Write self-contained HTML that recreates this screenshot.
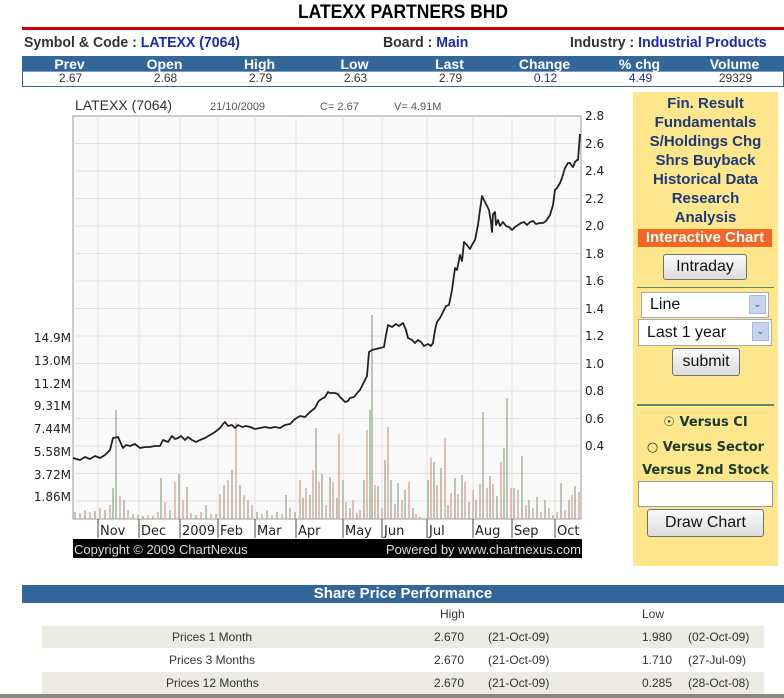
<!DOCTYPE html>
<html><head><meta charset="utf-8"><style>
*{margin:0;padding:0;box-sizing:border-box}
body{width:784px;height:698px;background:#fff;font-family:"Liberation Sans",Arial,sans-serif;position:relative;overflow:hidden}
.a{position:absolute}
.t{left:0;width:806px;text-align:center;top:2px;font-size:19px;font-weight:bold;color:#000;transform:scaleX(.92);transform-origin:403px 0}
.red{left:22px;top:27px;width:762px;height:3px;background:#c00}
.info{top:34px;font-size:15px;color:#333;font-weight:bold;white-space:nowrap;transform:scaleX(.94);transform-origin:0 0}
.info b{color:#1a2bb0;font-weight:bold}
.hdr{left:22px;top:56px;width:762px;height:16px;background:#336699;border-bottom:1px solid #7a9cc0}
.vals{left:22px;top:71px;width:762px;height:16px;border:1px solid #336699;border-top:none}
.cell{position:absolute;width:95px;text-align:center;font-size:14px}
.hdr .cell{color:#fff;font-weight:bold;top:0;line-height:16px}
.vals .cell{color:#333;font-size:12px;line-height:14px;top:0}
.side{left:633px;top:92px;width:145px;height:474px;background:#fde68b}
.lk{position:absolute;left:0;width:145px;text-align:center;font-size:15px;font-weight:bold;color:#1f3a7a}
.btn{position:absolute;background:linear-gradient(#fafafa,#ddd);border:1px solid #707070;border-radius:3px;font-size:16px;text-align:center;color:#111}
.sel{position:absolute;background:#fff;border:1px solid #a5acb5;font-size:16px;color:#111;padding-left:8px}
.sel i{position:absolute;right:2px;top:2px;width:17px;height:19px;background:#c5d3ef;border:1px solid #a8b8dc;font-style:normal;font-size:10px;color:#4d6185;text-align:center;line-height:17px}
.spp{left:22px;top:585px;width:762px;height:18px;background:#336699;color:#fff;font-weight:bold;font-size:15px;text-align:center;line-height:18px}
.row{position:absolute;left:42px;width:722px;height:22px;font-size:12px;color:#333;line-height:22px}
.row span{position:absolute}
.g{background:#ebebe1}
</style></head><body>
<div class="a t">LATEXX PARTNERS BHD</div>
<div class="a red"></div>
<div class="a info" style="left:24px">Symbol &amp; Code : <b>LATEXX (7064)</b></div>
<div class="a info" style="left:383px">Board : <b>Main</b></div>
<div class="a info" style="left:570px">Industry : <b>Industrial Products</b></div>
<div class="a hdr">
<div class="cell" style="left:0">Prev</div><div class="cell" style="left:95px">Open</div><div class="cell" style="left:190px">High</div><div class="cell" style="left:285px">Low</div><div class="cell" style="left:380px">Last</div><div class="cell" style="left:475px">Change</div><div class="cell" style="left:570px">% chg</div><div class="cell" style="left:665px">Volume</div>
</div>
<div class="a vals">
<div class="cell" style="left:0">2.67</div><div class="cell" style="left:95px">2.68</div><div class="cell" style="left:190px">2.79</div><div class="cell" style="left:285px">2.63</div><div class="cell" style="left:380px">2.79</div><div class="cell" style="left:475px;color:#1a2bb0">0.12</div><div class="cell" style="left:570px;color:#1a2bb0">4.49</div><div class="cell" style="left:665px">29329</div>
</div>

<svg class="a" style="left:0;top:90px" width="620" height="475" viewBox="0 90 620 475" font-family="Liberation Sans,Arial,sans-serif">
<rect x="73" y="116" width="508" height="403" fill="#f9f9f9" stroke="#999"/>
<g stroke="#e2e2e2" stroke-width="1">
<path d="M73 143.5H581M73 171H581M73 198.5H581M73 226H581M73 253.5H581M73 281H581M73 308.5H581M73 336H581M73 363.5H581M73 391H581M73 418.5H581M73 446H581M73 473.5H581M73 501H581"/>
<path d="M98 116V519M139 116V519M180 116V519M218 116V519M255 116V519M296 116V519M343 116V519M382 116V519M427 116V519M473 116V519M512 116V519M555 116V519"/>
</g>
<g stroke-width="1.5">
<path stroke="#a3b59d" d="M75 519V512M85 519V510M95 519V511M105 519V510M113 519V488M116 519V410M124 519V500M133 519V514M143 519V516M153 519V516M161 519V478M170 519V510M179 519V474M187 519V487M196 519V515M206 519V505M216 519V514M224 519V485M232 519V470M240 519V485M248 519V500M257 519V512M267 519V510M277 519V512M286 519V495M295 519V512M303 519V498M310 519V495M316 519V428M322 519V474M330 519V477M337 519V498M343 519V480M350 519V508M357 519V513M364 519V480M370 519V410M372 519V315M378 519V486M385 519V460M391 519V480M398 519V483M405 519V490M413 519V508M420 519V517M428 519V480M434 519V462M441 519V468M448 519V505M455 519V478M462 519V475M469 519V502M476 519V500M483 519V412M490 519V476M497 519V496M504 519V448M507 519V398M514 519V488M522 519V456M529 519V500M537 519V497M545 519V500M553 519V515M561 519V483M569 519V500M575 519V486"/>
<path stroke="#e2a898" d="M80 519V513M90 519V512M100 519V508M110 519V505M120 519V496M128 519V510M138 519V515M148 519V515M158 519V512M165 519V502M175 519V482M183 519V500M191 519V513M201 519V512M211 519V514M220 519V494M228 519V480M236 519V423M244 519V495M252 519V505M262 519V514M272 519V515M282 519V514M290 519V508M300 519V480M306 519V488M313 519V470M319 519V482M326 519V505M333 519V482M339 519V434M346 519V502M353 519V500M360 519V510M367 519V430M375 519V485M382 519V508M388 519V427M395 519V504M402 519V500M409 519V482M416 519V514M424 519V518M431 519V458M437 519V485M445 519V438M451 519V493M458 519V494M465 519V482M473 519V490M480 519V484M487 519V488M493 519V484M501 519V462M511 519V488M518 519V490M526 519V505M533 519V508M541 519V512M549 519V508M557 519V512M565 519V510M572 519V495M579 519V492"/>
</g>
<path fill="none" stroke="#222" stroke-width="1.8" stroke-linejoin="round" d="M73 458L80 460L85 457L90 459L95 456L100 458L105 455L110 450L113 438L118 437L123 448L126 445L130 446L135 444L140 448L145 447L150 447L155 446L160 446L163 440L168 442L172 436L175 439L178 438L181 436L185 440L188 437L192 440L196 442L200 440L205 438L210 435L215 432L220 428L223 424L225 422L228 426L232 425L235 428L238 425L242 427L246 426L250 427L255 429L260 428L265 427L270 428L275 427L280 428L285 425L290 424L295 419L300 416L305 417L310 412L315 408L318 402L320 400L325 397L328 392L330 393L335 393L338 394L340 397L343 400L345 402L348 401L350 398L354 397L358 392L360 390L364 382L367 376L369 352L372 350L376 349L380 348L384 347L386 335L388 325L392 327L396 324L399 326L403 323L406 330L408 338L412 340L415 343L418 340L421 342L424 346L428 344L431 346L433 343L435 330L437 322L440 318L443 312L446 306L449 305L452 290L455 268L457 270L460 255L462 261L464 242L467 245L470 249L472 245L475 240L478 225L480 210L482 196L486 204L489 210L491 222L492 232L493 214L495 212L496 225L498 220L500 226L503 222L506 226L509 227L512 230L515 227L518 225L521 223L524 222L527 225L530 222L533 221L536 224L540 223L543 223L546 221L550 215L553 205L555 190L557 188L560 183L562 178L565 168L568 163L570 163L572 166L573 167L575 162L577 160L578 160L580 134"/>
<text x="75" y="110" font-size="14" fill="#333">LATEXX (7064)</text>
<text x="210" y="110" font-size="11" fill="#555">21/10/2009</text>
<text x="320" y="110" font-size="11" fill="#555">C= 2.67</text>
<text x="394" y="110" font-size="11" fill="#555">V= 4.91M</text>
<g font-size="12" fill="#222" font-family="DejaVu Sans,sans-serif">
<text x="585" y="120">2.8</text><text x="585" y="148">2.6</text><text x="585" y="175">2.4</text><text x="585" y="203">2.2</text><text x="585" y="230">2.0</text><text x="585" y="258">1.8</text><text x="585" y="285">1.6</text><text x="585" y="313">1.4</text><text x="585" y="340">1.2</text><text x="585" y="368">1.0</text><text x="585" y="395">0.8</text><text x="585" y="423">0.6</text><text x="585" y="450">0.4</text>
</g>
<g font-size="12" fill="#222" font-family="DejaVu Sans,sans-serif" text-anchor="end">
<text x="71" y="342">14.9M</text><text x="71" y="365">13.0M</text><text x="71" y="388">11.2M</text><text x="71" y="410">9.31M</text><text x="71" y="433">7.44M</text><text x="71" y="456">5.58M</text><text x="71" y="479">3.72M</text><text x="71" y="501">1.86M</text>
</g>
<g stroke="#444"><path d="M98 519V538M139 519V538M180 519V538M218 519V538M255 519V538M296 519V538M343 519V538M382 519V538M427 519V538M473 519V538M512 519V538M555 519V538"/></g>
<g font-size="13" fill="#222" font-family="DejaVu Sans,sans-serif">
<text x="100" y="535">Nov</text><text x="141" y="535">Dec</text><text x="182" y="535">2009</text><text x="220" y="535">Feb</text><text x="257" y="535">Mar</text><text x="298" y="535">Apr</text><text x="345" y="535">May</text><text x="384" y="535">Jun</text><text x="429" y="535">Jul</text><text x="475" y="535">Aug</text><text x="514" y="535">Sep</text><text x="557" y="535">Oct</text>
</g>
<rect x="73" y="539" width="509" height="19" fill="#000"/>
<text x="74" y="554" font-size="13" fill="#ddd">Copyright © 2009 ChartNexus</text>
<text x="581" y="554" font-size="13" fill="#ddd" text-anchor="end">Powered by www.chartnexus.com</text>
</svg>

<div class="a side">
<div class="lk" style="top:3px">Fin. Result</div>
<div class="lk" style="top:22px">Fundamentals</div>
<div class="lk" style="top:41px">S/Holdings Chg</div>
<div class="lk" style="top:60px">Shrs Buyback</div>
<div class="lk" style="top:79px">Historical Data</div>
<div class="lk" style="top:98px">Research</div>
<div class="lk" style="top:117px">Analysis</div>
<div class="lk" style="top:137px;left:5px;width:134px;background:#f26522;color:#fff;height:18px;line-height:18px">Interactive Chart</div>
<div class="btn" style="left:30px;top:162px;width:84px;height:26px;line-height:24px">Intraday</div>
<div class="a" style="left:4px;top:195px;width:137px;height:1px;background:#5d8a6a"></div>
<div class="sel" style="left:8px;top:200px;width:128px;height:26px;line-height:24px">Line<i>&#8964;</i></div>
<div class="sel" style="left:5px;top:227px;width:134px;height:27px;line-height:25px">Last 1 year<i>&#8964;</i></div>
<div class="btn" style="left:39px;top:256px;width:68px;height:28px;line-height:26px">submit</div>
<div class="a" style="left:4px;top:312px;width:137px;height:2px;background:#5d8a6a"></div>
<div class="lk" style="top:323px;font-size:13px;font-family:'DejaVu Sans',sans-serif;color:#1a3b2a">&#9737; Versus CI</div>
<div class="lk" style="top:348px;font-size:13px;font-family:'DejaVu Sans',sans-serif;color:#1a3b2a">&#9675; Versus Sector</div>
<div class="lk" style="top:371px;font-size:13px;font-family:'DejaVu Sans',sans-serif;color:#1a3b2a">Versus 2nd Stock</div>
<div class="a" style="left:5px;top:389px;width:135px;height:26px;background:#fff;border:1px solid #999"></div>
<div class="btn" style="left:14px;top:417px;width:117px;height:28px;line-height:26px">Draw Chart</div>
</div>

<div class="a spp">Share Price Performance</div>
<div class="row" style="top:604px;height:20px;line-height:20px"><span style="left:398px">High</span><span style="left:600px">Low</span></div>
<div class="row g" style="top:626px"><span style="left:130px">Prices 1 Month</span><span style="left:392px">2.670</span><span style="left:446px">(21-Oct-09)</span><span style="left:600px">1.980</span><span style="left:646px">(02-Oct-09)</span></div>
<div class="row" style="top:649px"><span style="left:127px">Prices 3 Months</span><span style="left:392px">2.670</span><span style="left:446px">(21-Oct-09)</span><span style="left:600px">1.710</span><span style="left:646px">(27-Jul-09)</span></div>
<div class="row g" style="top:672px"><span style="left:124px">Prices 12 Months</span><span style="left:392px">2.670</span><span style="left:446px">(21-Oct-09)</span><span style="left:600px">0.285</span><span style="left:646px">(28-Oct-08)</span></div>
<div class="a" style="left:0;top:694px;width:784px;height:4px;background:#8a8a80"></div>
</body></html>
